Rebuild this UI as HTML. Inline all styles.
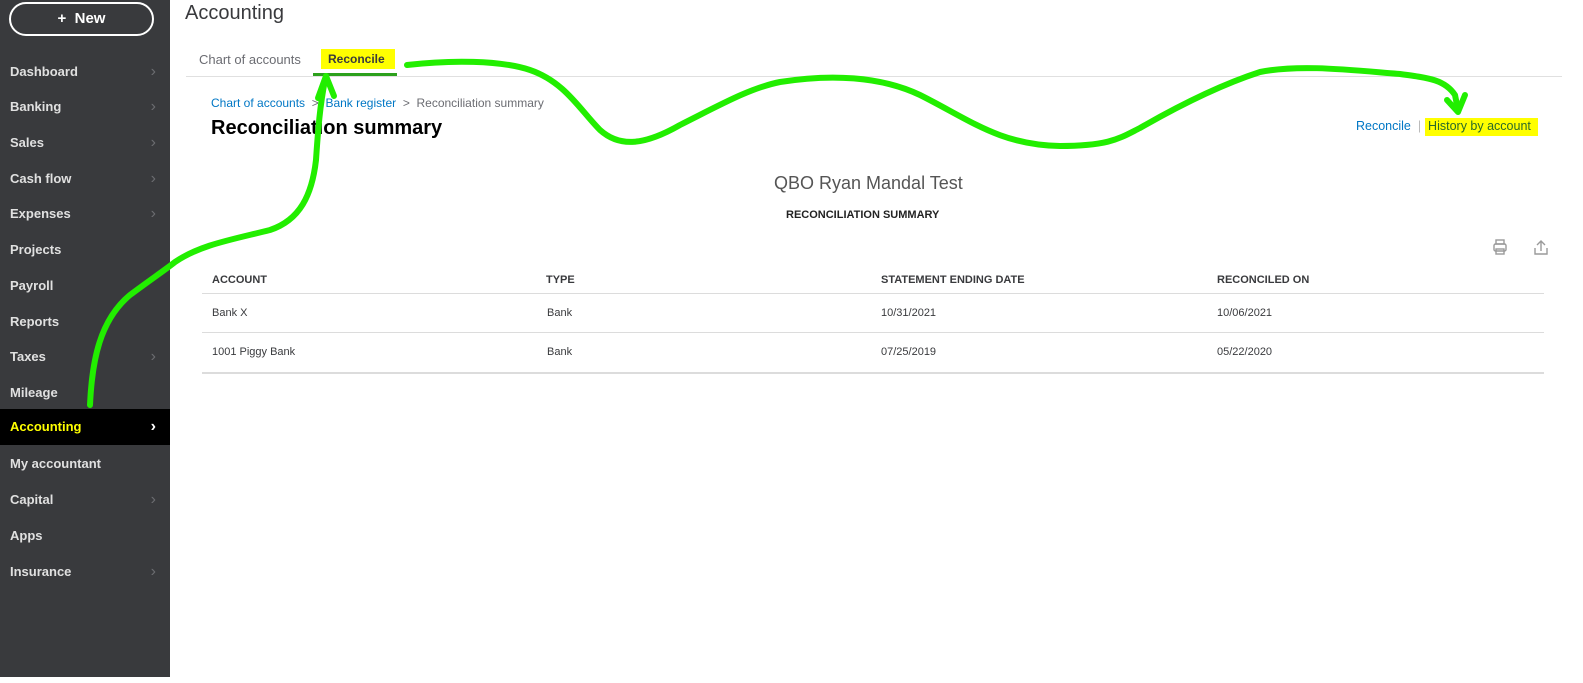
<!DOCTYPE html>
<html><head><meta charset="utf-8"><style>
*{margin:0;padding:0;box-sizing:border-box}
body{width:1583px;height:683px;position:relative;background:#fff;font-family:"Liberation Sans",sans-serif;overflow:hidden}
.sb{position:absolute;left:0;top:0;width:170px;height:677px;background:#393a3d}
.new{position:absolute;left:9px;top:2px;width:145px;height:34px;border:2px solid #fff;border-radius:17px;color:#fff;font-weight:bold;font-size:15px;text-align:center;line-height:30px}
.it{position:absolute;left:0;width:170px;height:36px;line-height:36px;padding-left:10px;color:#e0e0e0;font-size:13px;font-weight:bold}
.it span{position:absolute;right:14px;color:#6b6c70;font-size:16px;font-weight:normal}
.it.act{background:#000;color:#ffff00}
.it.act span{color:#fff;font-weight:bold}
.t{position:absolute;white-space:nowrap}
.blue{color:#0077c5}
.hd{font-size:11px;font-weight:bold;color:#393a3d}
.cell{font-size:11px;color:#393a3d}
.ln{position:absolute;left:202px;width:1342px;height:1px;background:#dcdcdc}
</style></head><body>
<div class="sb">
<div class="new">+&nbsp; New</div>
<div class="it" style="top:54px">Dashboard<span>›</span></div>
<div class="it" style="top:89px">Banking<span>›</span></div>
<div class="it" style="top:125px">Sales<span>›</span></div>
<div class="it" style="top:161px">Cash flow<span>›</span></div>
<div class="it" style="top:196px">Expenses<span>›</span></div>
<div class="it" style="top:232px">Projects</div>
<div class="it" style="top:268px">Payroll</div>
<div class="it" style="top:304px">Reports</div>
<div class="it" style="top:339px">Taxes<span>›</span></div>
<div class="it" style="top:375px">Mileage</div>
<div class="it act" style="top:409px">Accounting<span>›</span></div>
<div class="it" style="top:446px">My accountant</div>
<div class="it" style="top:482px">Capital<span>›</span></div>
<div class="it" style="top:518px">Apps</div>
<div class="it" style="top:554px">Insurance<span>›</span></div>
</div>
<div class="t" style="left:185px;top:2px;font-size:20px;color:#393a3d">Accounting</div>
<div class="t" style="left:199px;top:52px;font-size:13px;color:#6b6c72">Chart of accounts</div>
<div style="position:absolute;left:321px;top:49px;width:74px;height:20px;background:#ffff00"></div>
<div class="t" style="left:328px;top:52px;font-size:12px;font-weight:bold;color:#393a3d">Reconcile</div>
<div style="position:absolute;left:186px;top:76px;width:1376px;height:1px;background:#e0e0e0"></div>
<div style="position:absolute;left:313px;top:73px;width:84px;height:3px;background:#2ca01c"></div>
<div class="t" style="left:211px;top:96px;font-size:12px"><span class="blue">Chart of accounts</span> <span style="color:#6b6c72">&nbsp;&gt;&nbsp;</span> <span class="blue">Bank register</span> <span style="color:#6b6c72">&nbsp;&gt;&nbsp; Reconciliation summary</span></div>
<div class="t" style="left:211px;top:117px;font-size:20px;font-weight:bold;color:#000">Reconciliation summary</div>
<div style="position:absolute;left:1425px;top:118px;width:113px;height:18px;background:#ffff00"></div>
<div class="t" style="left:1356px;top:119px;font-size:12.5px"><span class="blue">Reconcile</span> <span style="color:#bbb">&nbsp;|&nbsp;&nbsp;</span><span style="color:#2a6a2a">History by account</span></div>
<div class="t" style="left:774px;top:173px;font-size:18px;color:#555">QBO Ryan Mandal Test</div>
<div class="t" style="left:786px;top:209px;font-size:11px;font-weight:bold;color:#222">RECONCILIATION SUMMARY</div>
<svg style="position:absolute;left:1490px;top:238px" width="60" height="20" fill="none" stroke="#9a9a9a" stroke-width="1.4">
<rect x="4" y="6" width="12" height="7" rx="1.5"/><rect x="6" y="2" width="8" height="4"/><rect x="6" y="11" width="8" height="5"/>
<path d="M51 3v10M47 7l4-4 4 4M45 10v6h12v-6"/></svg>
<div class="t hd" style="left:212px;top:274px">ACCOUNT</div>
<div class="t hd" style="left:546px;top:274px">TYPE</div>
<div class="t hd" style="left:881px;top:274px">STATEMENT ENDING DATE</div>
<div class="t hd" style="left:1217px;top:274px">RECONCILED ON</div>
<div class="ln" style="top:293px"></div>
<div class="t cell" style="left:212px;top:307px">Bank X</div>
<div class="t cell" style="left:547px;top:307px">Bank</div>
<div class="t cell" style="left:881px;top:307px">10/31/2021</div>
<div class="t cell" style="left:1217px;top:307px">10/06/2021</div>
<div class="ln" style="top:332px"></div>
<div class="t cell" style="left:212px;top:346px">1001 Piggy Bank</div>
<div class="t cell" style="left:547px;top:346px">Bank</div>
<div class="t cell" style="left:881px;top:346px">07/25/2019</div>
<div class="t cell" style="left:1217px;top:346px">05/22/2020</div>
<div class="ln" style="top:372px;height:2px"></div>
<svg style="position:absolute;left:0;top:0" width="1583" height="683" fill="none" stroke="#22ee00" stroke-width="6" stroke-linecap="round" stroke-linejoin="round">
<path d="M90 405 C92 360 100 320 130 295 C150 280 165 270 175 262 C200 245 230 240 270 230 C300 220 312 195 316 160 C318 130 320 105 325 80"/>
<path d="M318 98 L326 76 L334 96"/>
<path d="M407 65 C450 60 500 60 530 70 C565 82 580 110 600 130 C620 148 645 145 680 125 C720 105 750 88 780 82 C830 74 880 76 920 95 C970 120 1000 145 1060 146 C1110 146 1120 138 1140 128 C1180 105 1220 85 1260 72 C1300 64 1350 70 1400 74 C1430 78 1445 80 1455 95 L1458 110"/>
<path d="M1447 100 L1458 112 L1465 95"/>
</svg>
</body></html>
